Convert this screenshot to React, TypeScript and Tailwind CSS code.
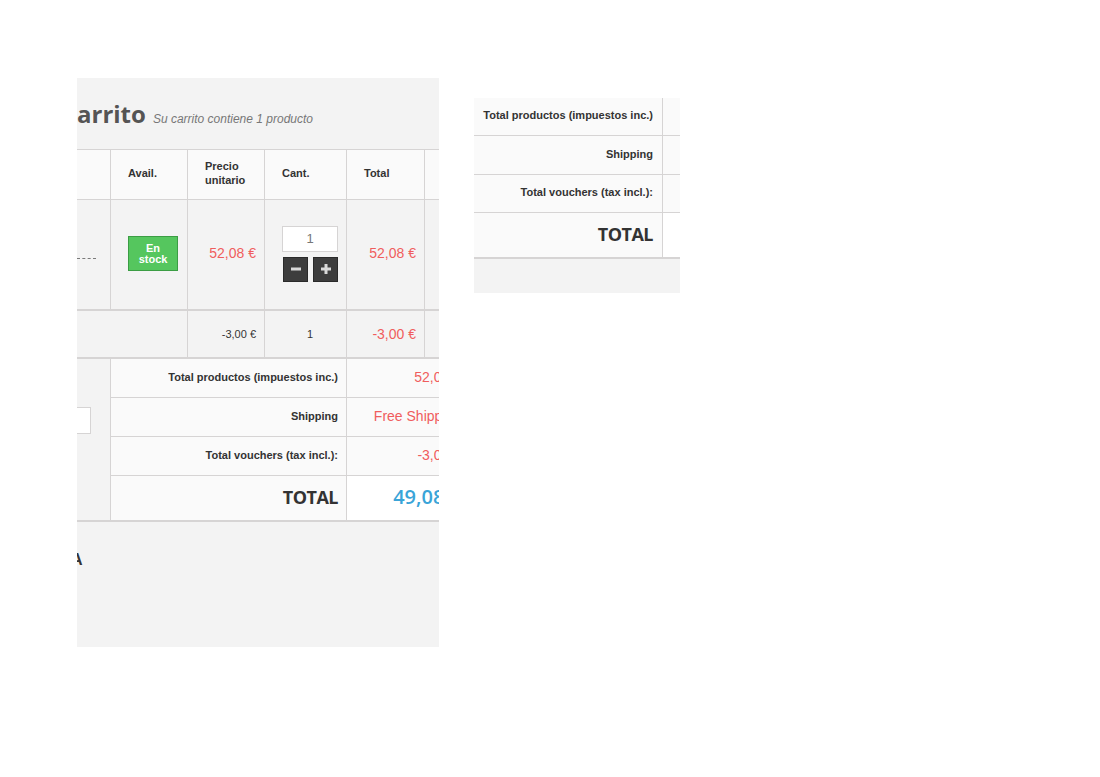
import React from "react";

const B = "border-[#d6d4d4]";

function Minus() {
  return (
    <svg width="12" height="12" viewBox="0 0 12 12">
      <rect x="1" y="4.5" width="10" height="3" fill="#d9d9d9" />
    </svg>
  );
}
function Plus() {
  return (
    <svg width="12" height="12" viewBox="0 0 12 12">
      <rect x="1" y="4.5" width="10" height="3" fill="#d9d9d9" />
      <rect x="4.5" y="1" width="3" height="10" fill="#d9d9d9" />
    </svg>
  );
}

export default function App() {
  return (
    <div className="min-h-[777px] w-[1100px] bg-white font-['Liberation_Sans',Arial,sans-serif] text-[#333]">
      <div className="flex items-start pl-[77px] pt-[78px]">
        {/* Panel 1 */}
        <div className="h-[569px] w-[362px] overflow-hidden bg-[#f3f3f3]">
          <div className="w-[520px]">
            {/* title */}
            <div className="flex h-[71px] items-baseline gap-[7px] pt-[21px]">
              <span className="font-['Open_Sans',sans-serif] text-[24px] font-bold leading-[30px] text-[#555454]">
                arrito
              </span>
              <span className="text-[12px] italic text-[#777]">Su carrito contiene 1 producto</span>
            </div>

            {/* header row */}
            <div className={`flex h-[51px] border-y ${B} bg-[#fafafa] text-[11px] font-bold leading-[14px]`}>
              <div className={`w-[34px] border-r ${B}`} />
              <div className={`flex w-[77px] items-center border-r ${B} pb-[4px] pl-[17px]`}>Avail.</div>
              <div className={`flex w-[77px] items-center border-r ${B} pb-[4px] pl-[17px]`}>
                Precio
                <br />
                unitario
              </div>
              <div className={`flex w-[82px] items-center border-r ${B} pb-[4px] pl-[17px]`}>Cant.</div>
              <div className={`flex w-[78px] items-center border-r ${B} pb-[4px] pl-[17px]`}>Total</div>
              <div className="flex-1" />
            </div>

            {/* product row */}
            <div className={`flex h-[111px] border-b-2 ${B}`}>
              <div className={`flex w-[34px] items-center border-r ${B} pt-[8px]`}>
                <div className="w-[19px] border-t border-dashed border-[#7a7a7a]" />
              </div>
              <div className={`flex w-[77px] items-center border-r ${B} pb-[2px] pl-[17px]`}>
                <div className="flex h-[35px] w-[50px] flex-col items-center justify-center border border-[#3b9d44] bg-[#55c65e] text-center text-[11px] font-bold leading-[11px] text-white">
                  <span>En</span>
                  <span>stock</span>
                </div>
              </div>
              <div className={`flex w-[77px] items-center justify-end border-r ${B} pb-[3px] pr-[8px] text-[14px] text-[#f05d5d]`}>
                52,08 €
              </div>
              <div className={`flex w-[82px] flex-col justify-center border-r ${B} pb-[2px] pl-[17px]`}>
                <div className={`flex h-[26px] w-[56px] items-center justify-center border ${B} bg-white text-[13px] text-[#777]`}>
                  1
                </div>
                <div className="mt-[5px] flex gap-[5px] pl-[1px]">
                  <div className="flex h-[25px] w-[25px] items-center justify-center border border-[#2a2a2a] bg-[#3d3d3d]">
                    <Minus />
                  </div>
                  <div className="flex h-[25px] w-[25px] items-center justify-center border border-[#2a2a2a] bg-[#3d3d3d]">
                    <Plus />
                  </div>
                </div>
              </div>
              <div className={`flex w-[78px] items-center justify-end border-r ${B} pb-[3px] pr-[8px] text-[14px] text-[#f05d5d]`}>
                52,08 €
              </div>
              <div className="flex-1" />
            </div>

            {/* voucher row */}
            <div className={`flex h-[48px] border-b-2 ${B}`}>
              <div className={`w-[111px] border-r ${B}`} />
              <div className={`flex w-[77px] items-center justify-end border-r ${B} pr-[8px] text-[11px]`}>-3,00 €</div>
              <div className={`flex w-[82px] items-center justify-center border-r ${B} pl-[9px] text-[11px]`}>1</div>
              <div className={`flex w-[78px] items-center justify-end border-r ${B} pr-[8px] text-[14px] text-[#f05d5d]`}>
                -3,00 €
              </div>
              <div className="flex-1" />
            </div>

            {/* footer */}
            <div className={`flex border-b-2 ${B}`}>
              <div className={`w-[34px] border-r ${B}`}>
                <div className={`mt-[48px] h-[27px] w-[14px] border border-l-0 ${B} bg-white`} />
              </div>
              <div className="flex flex-col">
                {[
                  ["Total productos (impuestos inc.)", "52,08 €"],
                  ["Shipping", "Free Shipping"],
                  ["Total vouchers (tax incl.):", "-3,00 €"],
                ].map(([l, v]) => (
                  <div key={l} className={`flex h-[39px] border-b ${B}`}>
                    <div className={`flex w-[236px] items-center justify-end border-r ${B} bg-[#fafafa] pb-[1px] pr-[8px] text-[11px] font-bold`}>
                      {l}
                    </div>
                    <div className="flex w-[123px] items-center justify-end whitespace-nowrap bg-[#fafafa] pb-[1px] pr-[9px] text-[14px] text-[#f05d5d]">
                      {v}
                    </div>
                  </div>
                ))}
                <div className="flex h-[44px]">
                  <div className={`flex w-[236px] items-center justify-end border-r ${B} bg-[#fafafa] pb-[2px] pr-[8px] font-['Open_Sans',sans-serif] text-[18px] font-bold tracking-[-0.5px] text-[#333]`}>
                    TOTAL
                  </div>
                  <div className="flex w-[123px] items-center justify-end whitespace-nowrap bg-white pb-[2px] pr-[9px] font-['Open_Sans',sans-serif] text-[20px] font-semibold text-[#3aa4d8]">
                    49,08 €
                  </div>
                </div>
              </div>
            </div>

            <div className="-ml-[6px] pt-[28px] text-[16px] font-bold leading-[20px] text-[#333]">A</div>
          </div>
        </div>

        {/* Panel 2 */}
        <div className="ml-[35px] mt-[20px] h-[195px] w-[206px] overflow-hidden bg-[#f3f3f3]">
          <div className={`border-b-2 ${B}`}>
            {[
              ["Total productos (impuestos inc.)", "h-[38px]"],
              ["Shipping", "h-[39px]"],
              ["Total vouchers (tax incl.):", "h-[38px]"],
            ].map(([l, h]) => (
              <div key={l} className={`flex ${h} border-b ${B}`}>
                <div className={`flex w-[189px] shrink-0 items-center justify-end border-r ${B} bg-[#fafafa] pb-[2px] pr-[9px] text-[11px] font-bold`}>
                  {l}
                </div>
                <div className="flex-1 bg-[#fafafa]" />
              </div>
            ))}
            <div className="flex h-[44px]">
              <div className={`flex w-[189px] shrink-0 items-center justify-end border-r ${B} bg-[#fafafa] pb-[2px] pr-[9px] font-['Open_Sans',sans-serif] text-[18px] font-bold tracking-[-0.5px] text-[#333]`}>
                TOTAL
              </div>
              <div className="flex-1 bg-white" />
            </div>
          </div>
        </div>
      </div>
    </div>
  );
}
